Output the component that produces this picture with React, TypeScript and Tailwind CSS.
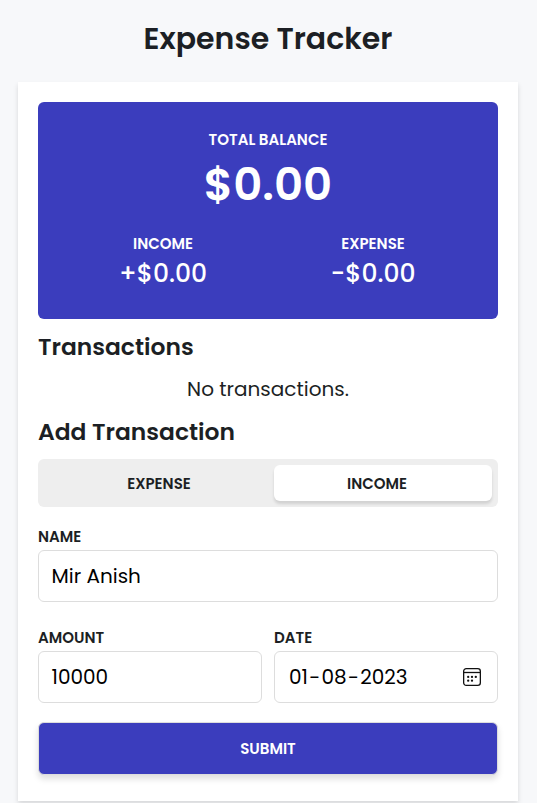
import { useState } from "react";

type Kind = "expense" | "income";

function CalendarIcon() {
  return (
    <svg width="18" height="18" viewBox="0 0 18 18" fill="none" className="block shrink-0">
      <rect x="0.65" y="0.65" width="16.7" height="16.7" rx="2.6" stroke="#111" strokeWidth="1.3" />
      <path d="M1 4.5H17" stroke="#111" strokeWidth="1.3" />
      <g fill="#111">
        <circle cx="5.2" cy="8.9" r="1.15" />
        <circle cx="9" cy="8.9" r="1.15" />
        <circle cx="12.8" cy="8.9" r="1.15" />
        <circle cx="5.2" cy="12.7" r="1.15" />
        <circle cx="9" cy="12.7" r="1.15" />
      </g>
    </svg>
  );
}

export default function App() {
  const [kind, setKind] = useState<Kind>("income");
  const tab = "flex h-9 items-center justify-center rounded-md pt-0.5 text-[15px] font-semibold leading-5";
  const active = "bg-white shadow-[0_3px_3px_rgba(0,0,0,0.12)]";

  return (
    <div className="h-[803px] overflow-hidden bg-[#f7f8fa] pl-[18px] font-[Poppins,Inter,sans-serif] text-[#1c1f24]">
      <div className="w-[500px]">
        <h1 className="flex h-[82px] items-start justify-center pt-[19px] text-[30px] font-semibold leading-10">
          Expense Tracker
        </h1>
        <main className="h-[719px] bg-white p-5 shadow-[0_3px_5px_rgba(0,0,0,0.13)]">
          <section className="flex h-[217px] flex-col items-center rounded-md bg-[#3b3dbd] pt-7 text-white">
            <span className="text-[15px] font-semibold leading-5">TOTAL BALANCE</span>
            <span className="mt-[7px] text-[45px] font-semibold leading-[56px]">$0.00</span>
            <div className="mt-[21px] grid w-[420px] grid-cols-2 text-center">
              <div className="flex flex-col">
                <span className="text-[15px] font-semibold leading-5">INCOME</span>
                <span className="mt-[5px] text-[25px] font-medium leading-[30px]">+$0.00</span>
              </div>
              <div className="flex flex-col">
                <span className="text-[15px] font-semibold leading-5">EXPENSE</span>
                <span className="mt-[5px] text-[25px] font-medium leading-[30px]">-$0.00</span>
              </div>
            </div>
          </section>

          <h2 className="mt-3 text-[23.4px] font-semibold leading-8">Transactions</h2>
          <p className="mt-2.5 text-center text-xl leading-8">No transactions.</p>
          <h2 className="mt-[11px] text-[23.4px] font-semibold leading-8">Add Transaction</h2>

          <form onSubmit={(e) => e.preventDefault()}>
            <div className="mt-[11px] grid h-12 grid-cols-2 items-center rounded-md bg-[#eeeeee] px-1.5">
              <button type="button" onClick={() => setKind("expense")} className={`${tab} mr-1.5 pl-3 ${kind === "expense" ? active : ""}`}>
                <span>EXPENSE</span>
              </button>
              <button type="button" onClick={() => setKind("income")} className={`${tab} ml-1.5 pr-3 ${kind === "income" ? active : ""}`}>
                <span>INCOME</span>
              </button>
            </div>

            <label className="mt-5 block text-[15px] font-semibold leading-5">
              <span className="block">NAME</span>
              <span className="mt-[3px] flex h-[52px] items-center rounded-md border border-[#dddddd] px-[12.5px] text-xl font-normal text-black">
                <span>Mir Anish</span>
              </span>
            </label>

            <div className="mt-[26px] grid grid-cols-2 gap-3 text-[15px] font-semibold leading-5">
              <div>
                <span className="block">AMOUNT</span>
                <div className="mt-[3px] flex h-[52px] items-center rounded-md border border-[#dddddd] px-[12.5px] text-xl font-normal text-black">
                  <span>10000</span>
                </div>
              </div>
              <div>
                <span className="block">DATE</span>
                <div className="mt-[3px] flex h-[52px] items-center justify-between rounded-md border border-[#dddddd] pl-3.5 pr-4 text-xl font-normal text-black">
                  <span>
                    01<span className="mx-[1.25px]">-</span>08<span className="mx-[1.25px]">-</span>2023
                  </span>
                  <CalendarIcon />
                </div>
              </div>
            </div>

            <button className="mt-[19px] flex h-[53px] w-full items-center justify-center rounded-md border border-[#dddddd] bg-[#3b3dbd] text-[15px] font-semibold leading-5 text-white shadow-[0_4px_6px_rgba(0,0,0,0.13)]">
              <span>SUBMIT</span>
            </button>
          </form>
        </main>
      </div>
    </div>
  );
}
